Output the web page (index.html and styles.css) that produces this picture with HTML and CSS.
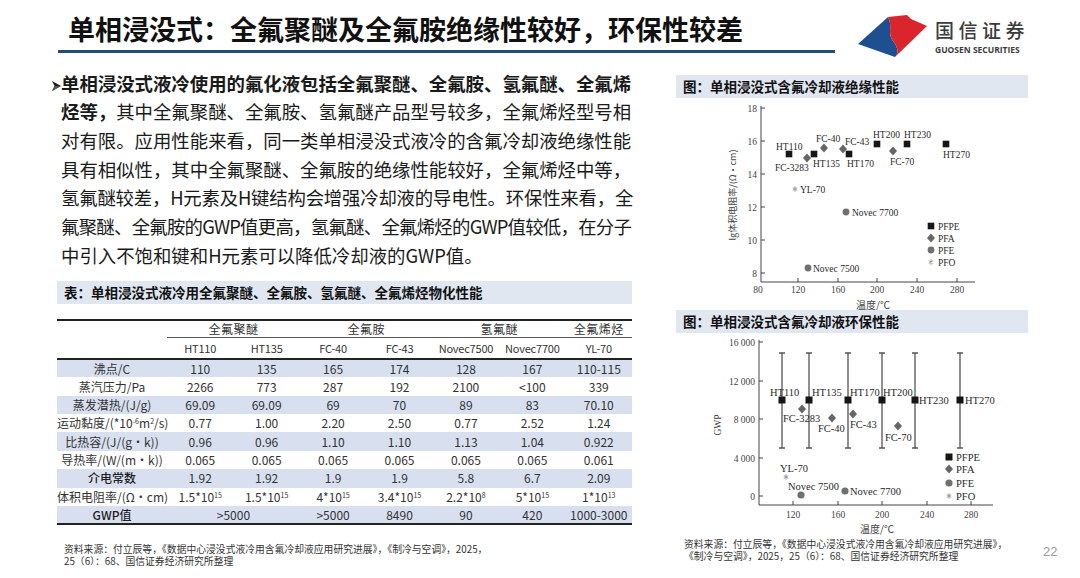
FILE: index.html
```html
<!DOCTYPE html>
<html lang="zh-CN">
<head>
<meta charset="utf-8">
<title>单相浸没式</title>
<link rel="stylesheet" href="styles.css">
</head>
<body>
<div class="slide">
  <header class="top">
    <div class="title-wrap">
      <h1 class="title">单相浸没式：全氟聚醚及全氟胺绝缘性较好，环保性较差</h1>
    </div>
    <div class="logo">
      <svg class="logo-mark" viewBox="0 0 70 44" width="70" height="44">
        <path d="M0 30 L30 3 C35 12 29 19 35 27 C40 33 41 39 37 43 Z" fill="#1d4f91"/>
        <path d="M30 3 L49 1 L53 5 L69 12 L37 43 C41 39 40 33 35 27 C29 19 35 12 30 3 Z" fill="#d9252b"/>
      </svg>
      <div class="logo-text">
        <div class="logo-cn">国信证券</div>
        <div class="logo-en">GUOSEN SECURITIES</div>
      </div>
    </div>
  </header>

  <main class="content">
    <section class="left">
      <div class="para">
        <span class="ln"><svg class="arrow" viewBox="0 0 9 10" width="9" height="10"><path d="M0 0 L9 5 L0 10 L2.6 5 Z" fill="#1a1a1a"/><path d="M2.6 5 L9 5 L0 10 Z" fill="#555"/></svg><b>单相浸没式液冷使用的氟化液包括全氟聚醚、全氟胺、氢氟醚、全氟烯</b></span>
        <span class="ln"><b>烃等，</b>其中全氟聚醚、全氟胺、氢氟醚产品型号较多，全氟烯烃型号相</span>
        <span class="ln">对有限。应用性能来看，同一类单相浸没式液冷的含氟冷却液绝缘性能</span>
        <span class="ln">具有相似性，其中全氟聚醚、全氟胺的绝缘性能较好，全氟烯烃中等，</span>
        <span class="ln t1">氢氟醚较差，H元素及H键结构会增强冷却液的导电性。环保性来看，全</span>
        <span class="ln t2">氟聚醚、全氟胺的GWP值更高，氢氟醚、全氟烯烃的GWP值较低，在分子</span>
        <span class="ln end">中引入不饱和键和H元素可以降低冷却液的GWP值。</span>
      </div>

      <div class="bar">表：单相浸没式液冷用全氟聚醚、全氟胺、氢氟醚、全氟烯烃物化性能</div>

      <table class="data">
        <colgroup><col class="c-lab"><col class="c-val" span="7"></colgroup>
        <thead>
          <tr class="grp">
            <th rowspan="2" class="blank"></th>
            <th colspan="2">全氟聚醚</th>
            <th colspan="2">全氟胺</th>
            <th colspan="2">氢氟醚</th>
            <th>全氟烯烃</th>
          </tr>
          <tr class="sub">
            <th>HT110</th><th>HT135</th><th>FC-40</th><th>FC-43</th><th>Novec7500</th><th>Novec7700</th><th>YL-70</th>
          </tr>
        </thead>
        <tbody>
          <tr><td>沸点/C</td><td>110</td><td>135</td><td>165</td><td>174</td><td>128</td><td>167</td><td>110-115</td></tr>
          <tr><td>蒸汽压力/Pa</td><td>2266</td><td>773</td><td>287</td><td>192</td><td>2100</td><td>&lt;100</td><td>339</td></tr>
          <tr><td>蒸发潜热/(J/g)</td><td>69.09</td><td>69.09</td><td>69</td><td>70</td><td>89</td><td>83</td><td>70.10</td></tr>
          <tr><td>运动黏度/(*10<sup>-6</sup>m<sup>2</sup>/s)</td><td>0.77</td><td>1.00</td><td>2.20</td><td>2.50</td><td>0.77</td><td>2.52</td><td>1.24</td></tr>
          <tr><td>比热容/(J/(g·k))</td><td>0.96</td><td>0.96</td><td>1.10</td><td>1.10</td><td>1.13</td><td>1.04</td><td>0.922</td></tr>
          <tr><td>导热率/(W/(m·k))</td><td>0.065</td><td>0.065</td><td>0.065</td><td>0.065</td><td>0.065</td><td>0.065</td><td>0.061</td></tr>
          <tr><td class="strong">介电常数</td><td>1.92</td><td>1.92</td><td>1.9</td><td>1.9</td><td>5.8</td><td>6.7</td><td>2.09</td></tr>
          <tr><td>体积电阻率/(Ω·cm)</td><td>1.5*10<sup>15</sup></td><td>1.5*10<sup>15</sup></td><td>4*10<sup>15</sup></td><td>3.4*10<sup>15</sup></td><td>2.2*10<sup>8</sup></td><td>5*10<sup>15</sup></td><td>1*10<sup>13</sup></td></tr>
          <tr><td class="strong">GWP值</td><td colspan="2">&gt;5000</td><td>&gt;5000</td><td>8490</td><td>90</td><td>420</td><td>1000-3000</td></tr>
        </tbody>
      </table>

      <p class="src">资料来源：付立辰等，《数据中心浸没式液冷用含氟冷却液应用研究进展》，《制冷与空调》，2025，<br>25（6）：68、国信证券经济研究所整理</p>
    </section>

    <section class="right">
      <div class="bar">图：单相浸没式含氟冷却液绝缘性能</div>
      <svg class="chart" viewBox="676 98 352 212" width="352" height="212">
        <path class="ax" d="M761 106V282H975"/>
        <path class="ax" d="M761 108h4M761 141h4M761 174h4M761 207h4M761 240h4M761 273h4M798 282v-4M838 282v-4M877 282v-4M917 282v-4M957 282v-4"/>
        <g class="tk" text-anchor="end">
          <text x="757" y="111.5">18</text>
          <text x="757" y="144.5">16</text>
          <text x="757" y="177.5">14</text>
          <text x="757" y="210.5">12</text>
          <text x="757" y="243.5">10</text>
          <text x="757" y="276.5">8</text>
        </g>
        <g class="tk" text-anchor="middle">
          <text x="758" y="293">80</text>
          <text x="798" y="293">120</text>
          <text x="838" y="293">160</text>
          <text x="877" y="293">200</text>
          <text x="917" y="293">240</text>
          <text x="957" y="293">280</text>
        </g>
        <text class="cn" x="873" y="308.5" text-anchor="middle">温度/℃</text>
        <text class="cn sm" x="733" y="198" text-anchor="middle" transform="rotate(-90 733 195)">lg体积电阻率/(Ω·cm)</text>

        <g class="sq">
          <rect x="785.7" y="150.7" width="6.6" height="6.6"/>
          <rect x="810.7" y="150.7" width="6.6" height="6.6"/>
          <rect x="845.7" y="150.7" width="6.6" height="6.6"/>
          <rect x="873.7" y="140.7" width="6.6" height="6.6"/>
          <rect x="903.7" y="140.7" width="6.6" height="6.6"/>
          <rect x="942.7" y="140.7" width="6.6" height="6.6"/>
          <rect x="927.7" y="222.7" width="6.6" height="6.6"/>
        </g>
        <g class="dm">
          <polygon points="807,153.5 811,158 807,162.5 803,158"/>
          <polygon points="824,143.5 828,148 824,152.5 820,148"/>
          <polygon points="843,144.5 847,149 843,153.5 839,149"/>
          <polygon points="893,146.5 897,151 893,155.5 889,151"/>
          <polygon points="931,233.5 935,238 931,242.5 927,238"/>
        </g>
        <g class="ci">
          <circle cx="846" cy="212" r="3.4"/>
          <circle cx="808" cy="268" r="3.4"/>
          <circle cx="931" cy="250" r="3.4"/>
        </g>
        <path class="st" d="M795 186.3v5.4M792.7 187.6l4.6 2.8M792.7 190.4l4.6-2.8M931 259.3v5.4M928.7 260.6l4.6 2.8M928.7 263.4l4.6-2.8"/>

        <g class="lb">
          <text x="776" y="149.5">HT110</text>
          <text x="775" y="170.5">FC-3283</text>
          <text x="813" y="166.5">HT135</text>
          <text x="816" y="141.5">FC-40</text>
          <text x="845" y="144.5">FC-43</text>
          <text x="847" y="166.5">HT170</text>
          <text x="873" y="137.5">HT200</text>
          <text x="890" y="164.5">FC-70</text>
          <text x="904" y="137.5">HT230</text>
          <text x="943" y="157.5">HT270</text>
          <text x="800" y="192.5">YL-70</text>
          <text x="852" y="215.5">Novec 7700</text>
          <text x="813" y="271.5">Novec 7500</text>
          <text x="938" y="229.5">PFPE</text>
          <text x="938" y="241.5">PFA</text>
          <text x="938" y="253.5">PFE</text>
          <text x="938" y="265.5">PFO</text>
        </g>
      </svg>

      <div class="bar">图：单相浸没式含氟冷却液环保性能</div>
      <svg class="chart" viewBox="676 333 352 205" width="352" height="205">
        <path class="ax" d="M759 340V505H993"/>
        <path class="ax" d="M759 342h4M759 381h4M759 419h4M759 458h4M759 496h4M793 505v-4M838 505v-4M882 505v-4M927 505v-4M971 505v-4"/>
        <g class="tk" text-anchor="end">
          <text x="755" y="345.5">16 000</text>
          <text x="755" y="384.5">12 000</text>
          <text x="755" y="422.5">8 000</text>
          <text x="755" y="461.5">4 000</text>
          <text x="755" y="499.5">0</text>
        </g>
        <g class="tk" text-anchor="middle">
          <text x="793" y="518">120</text>
          <text x="838" y="518">160</text>
          <text x="882" y="518">200</text>
          <text x="927" y="518">240</text>
          <text x="971" y="518">280</text>
        </g>
        <text class="cn" x="877" y="533" text-anchor="middle">温度/℃</text>
        <text class="tk" x="717" y="428.5" text-anchor="middle" transform="rotate(-90 717 425)">GWP</text>

        <path class="eb" d="M782 353V448M779 353h6M779 448h6M809 353V448M806 353h6M806 448h6M848 353V448M845 353h6M845 448h6M882 353V448M879 353h6M879 448h6M915 353V448M912 353h6M912 448h6M960 353V448M957 353h6M957 448h6"/>
        <g class="sq">
          <rect x="778.5" y="396.5" width="7" height="7"/>
          <rect x="805.5" y="396.5" width="7" height="7"/>
          <rect x="844.5" y="396.5" width="7" height="7"/>
          <rect x="878.5" y="396.5" width="7" height="7"/>
          <rect x="911.5" y="396.5" width="7" height="7"/>
          <rect x="956.5" y="396.5" width="7" height="7"/>
          <rect x="945.5" y="453.5" width="7" height="7"/>
        </g>
        <g class="dm">
          <polygon points="802,404.5 806,409 802,413.5 798,409"/>
          <polygon points="832,413.5 836,418 832,422.5 828,418"/>
          <polygon points="853,409.5 857,414 853,418.5 849,414"/>
          <polygon points="898,421.5 902,426 898,430.5 894,426"/>
          <polygon points="949,464.5 953,469 949,473.5 945,469"/>
        </g>
        <g class="ci">
          <circle cx="801" cy="495" r="3.6"/>
          <circle cx="845" cy="491" r="3.6"/>
          <circle cx="949" cy="483" r="3.6"/>
        </g>
        <path class="st" d="M786 474.3v5.4M783.7 475.6l4.6 2.8M783.7 478.4l4.6-2.8M949 493.3v5.4M946.7 494.6l4.6 2.8M946.7 497.4l4.6-2.8"/>

        <g class="lb lg">
          <text x="770" y="395.5">HT110</text>
          <text x="812" y="395.5">HT135</text>
          <text x="850" y="395.5">HT170</text>
          <text x="883" y="395.5">HT200</text>
          <text x="919" y="403.5">HT230</text>
          <text x="965" y="403.5">HT270</text>
          <text x="783" y="421.5">FC-3283</text>
          <text x="818" y="431.5">FC-40</text>
          <text x="850" y="427.5">FC-43</text>
          <text x="885" y="440.5">FC-70</text>
          <text x="780" y="471.5">YL-70</text>
          <text x="788" y="489.5">Novec 7500</text>
          <text x="850" y="494.5">Novec 7700</text>
          <text x="956" y="460.5">PFPE</text>
          <text x="956" y="472.5">PFA</text>
          <text x="956" y="486.5">PFE</text>
          <text x="956" y="499.5">PFO</text>
        </g>
      </svg>
      <p class="src">资料来源：付立辰等，《数据中心浸没式液冷用含氟冷却液应用研究进展》，<br>《制冷与空调》，2025，25（6）：68、国信证券经济研究所整理</p>
    </section>

    <div class="pager">22</div>
  </main>
</div>
</body>
</html>
```

FILE: styles.css
```css
* {
  box-sizing: border-box;
  margin: 0;
  padding: 0;
}

html, body {
  width: 1080px;
  height: 578px;
  overflow: hidden;
  background: #ffffff;
}

body {
  font-family: "Noto Sans CJK SC", sans-serif;
  color: #1a1a1a;
}

.slide {
  width: 1080px;
  height: 578px;
}

/* header */
.top {
  display: flex;
  height: 53px;
}

.title-wrap {
  margin-left: 58px;
  width: 777px;
  height: 53px;
  border-bottom: 3px solid #1f4e79;
  padding: 12.5px 0 0 10px;
}

.title {
  font-size: 27px;
  line-height: 32px;
  font-weight: 700;
  color: #111111;
  white-space: nowrap;
}

.logo {
  display: flex;
  margin-left: 23px;
  margin-top: 14px;
  height: 44px;
}

.logo-mark {
  display: block;
}

.logo-text {
  margin-left: 7px;
  padding-top: 5px;
}

.logo-cn {
  font-size: 19px;
  line-height: 22px;
  letter-spacing: 4.5px;
  color: #3c3c3c;
  font-weight: 500;
  white-space: nowrap;
}

.logo-en {
  font-family: "Open Sans", "Liberation Sans", sans-serif;
  font-size: 8.5px;
  font-weight: 700;
  line-height: 10px;
  margin-top: 4px;
  color: #3c3c3c;
  white-space: nowrap;
}

/* content */
.content {
  display: flex;
  align-items: flex-start;
}

.left {
  margin-left: 57px;
  width: 575px;
  padding-top: 15.5px;
}

.para {
  padding-left: 4px;
  width: 574px;
  font-size: 18.4px;
  line-height: 28.7px;
  color: #1a1a1a;
}

.ln {
  display: block;
  white-space: nowrap;
  text-align: justify;
  text-align-last: justify;
}

.ln.end {
  text-align-last: left;
}

.ln.t1 {
  letter-spacing: -0.2px;
}

.ln.t2 {
  letter-spacing: -0.9px;
}

.para b {
  font-weight: 700;
}

.arrow {
  display: inline-block;
  width: 9px;
  height: 10px;
  margin-left: -9px;
  vertical-align: 0;
}

.bar {
  background: #e1e7f1;
  height: 23px;
  line-height: 23px;
  padding-left: 7px;
  font-size: 13.5px;
  font-weight: 700;
  color: #111111;
  white-space: nowrap;
}

.left .bar {
  margin-top: 11.5px;
}

/* table */
.data {
  margin-top: 15px;
  width: 575px;
  border-collapse: collapse;
  table-layout: fixed;
  font-size: 12px;
  color: #333333;
  border-top: 2px solid #222222;
}

.c-lab {
  width: 110px;
}

.c-val {
  width: 66.43px;
}

.data th,
.data td {
  font-weight: 400;
  text-align: center;
  padding: 0;
  white-space: nowrap;
  line-height: 14px;
}

.grp th {
  height: 18px;
  border-bottom: 1px solid #555555;
  letter-spacing: 0.5px;
}

.grp th.blank {
  border-bottom: 2px solid #222222;
}

.sub th {
  height: 21px;
  border-bottom: 2px solid #222222;
  font-size: 11px;
  letter-spacing: -0.2px;
}

.data tbody td {
  height: 18.4px;
}

.data tbody tr:nth-child(odd) {
  background: #d8e0f0;
}

.data tbody tr:last-child td {
  border-bottom: 2px solid #222222;
}

.data td.strong {
  font-weight: 500;
  color: #1e1e1e;
}

.data sup {
  font-size: 7px;
  line-height: 0;
  vertical-align: 4px;
}

.src {
  margin-top: 18px;
  padding-left: 7px;
  font-size: 9.8px;
  line-height: 12px;
  color: #333333;
  white-space: nowrap;
}

/* right column */
.right {
  margin-left: 44px;
  width: 352px;
  padding-top: 22px;
}

.chart {
  display: block;
}

.right .src {
  margin-top: 0;
  padding-left: 8px;
  line-height: 12px;
}

.ax {
  fill: none;
  stroke: #444444;
  stroke-width: 1;
}

.eb {
  fill: none;
  stroke: #555555;
  stroke-width: 1.3;
}

.tk {
  font-family: "Liberation Serif", serif;
  font-size: 9.5px;
  fill: #444444;
}

.cn {
  font-family: "Noto Sans CJK SC", sans-serif;
  font-size: 10px;
  fill: #444444;
}

.cn.sm {
  font-size: 9px;
}

.lb text {
  font-family: "Liberation Serif", serif;
  font-size: 9.5px;
  fill: #2a2a2a;
}

.lb.lg text {
  font-size: 10.5px;
}

.sq {
  fill: #161616;
}

.dm {
  fill: #666666;
}

.ci {
  fill: #707070;
}

.st {
  fill: none;
  stroke: #a0a0a0;
  stroke-width: 1.1;
}

.pager {
  align-self: flex-end;
  margin-left: 15px;
  margin-bottom: 7px;
  font-family: "Liberation Sans", sans-serif;
  font-size: 13px;
  line-height: 16px;
  color: #9a9a9a;
}
```
